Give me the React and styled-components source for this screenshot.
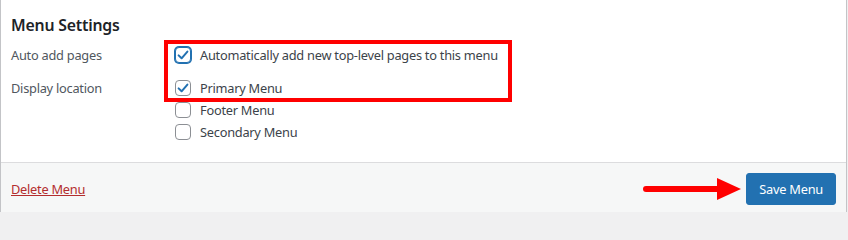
import React from 'react';
import styled, { createGlobalStyle } from 'styled-components';

const GlobalStyle = createGlobalStyle`
   html, body {
      margin: 0;
      padding: 0;
      background: #f0f0f1;
   }
   body {
      font-family: "Noto Sans", "Open Sans", Arial, sans-serif;
      font-size: 12.8px;
      letter-spacing: -0.25px;
      color: #3c434a;
   }
`

const Panel = styled.div`
   width: 845px;
   height: 212px;
   display: flex;
   flex-direction: column;
   background: #fff;
   border-left: 1px solid #c3c4c7;
   border-right: 1px solid #c3c4c7;
`
const Body = styled.div`
   position: relative;
   padding: 14px 10px 19px 10px;
`
const Heading = styled.h3`
   margin: 0 0 8px 0;
   font-size: 15.8px;
   letter-spacing: -0.2px;
   line-height: 22px;
   font-weight: 600;
   color: #1d2327;
`
const SettingsGrid = styled.div`
   display: grid;
   grid-template-columns: 164px 1fr;
   row-gap: 11px;
`
const RowLabel = styled.div`
   height: 22px;
   line-height: 23px;
   color: #50575e;
`
const OptionList = styled.div`
   display: flex;
   flex-direction: column;
`
const Option = styled.label`
   display: flex;
   align-items: center;
   gap: 9px;
   height: 22px;
   color: #3c434a;
`
const Box = styled.span`
   box-sizing: border-box;
   width: 16px;
   height: 16px;
   flex: none;
   display: flex;
   align-items: center;
   justify-content: center;
   border: 1px solid ${({ $focused }) => ($focused ? '#2271b1' : '#8c8f94')};
   border-radius: 4px;
   background: #fff;
   box-shadow: ${({ $focused }) => ($focused ? '0 0 0 1px #2271b1' : 'none')};
`
const Highlight = styled.div`
   position: absolute;
   left: 163px;
   top: 40px;
   width: 348px;
   height: 62px;
   box-sizing: border-box;
   border: 4px solid #ff0000;
   pointer-events: none;
`
const Footer = styled.div`
   flex: 1;
   display: flex;
   align-items: flex-start;
   justify-content: space-between;
   padding: 10px 10px 0 10px;
   background: #f6f7f7;
   border-top: 1px solid #dcdcde;
`
const DeleteLink = styled.a`
   margin-top: 6px;
   line-height: 20px;
   color: #b32d2e;
   text-decoration: underline;
   cursor: pointer;
`
const Actions = styled.div`
   display: flex;
   align-items: center;
   gap: 4px;
`
const SaveButton = styled.button`
   height: 32px;
   padding: 0 12px;
   font-family: inherit;
   font-size: 12.8px;
   letter-spacing: -0.25px;
   color: #fff;
   background: #2271b1;
   border: 1px solid #2271b1;
   border-radius: 3px;
   cursor: pointer;
`

const Check = ({ checked, focused }) => (
   <Box $focused={focused}>
      {checked && (
         <svg width="14" height="14" viewBox="0 0 14 14">
            <path d="M2.6 7.4 L5.6 10.3 L11.4 3.6" fill="none" stroke="#2271b1" strokeWidth="2" strokeLinecap="round" strokeLinejoin="round"/>
         </svg>
      )}
   </Box>
)

const Arrow = () => (
   <svg width="100" height="22" viewBox="0 0 100 22">
      <line x1="4" y1="11" x2="78" y2="11" stroke="#ff0000" strokeWidth="6" strokeLinecap="round"/>
      <polygon points="75,0 99,11 75,22" fill="#ff0000"/>
   </svg>
)

const locations = [
   { name: 'Primary Menu', checked: true },
   { name: 'Footer Menu', checked: false },
   { name: 'Secondary Menu', checked: false },
]

const App = () => {
   return(
      <>
         <GlobalStyle/>
         <Panel>
            <Body>
               <Heading>Menu Settings</Heading>
               <SettingsGrid>
                  <RowLabel>Auto add pages</RowLabel>
                  <OptionList>
                     <Option>
                        <Check checked focused/>
                        Automatically add new top-level pages to this menu
                     </Option>
                  </OptionList>

                  <RowLabel>Display location</RowLabel>
                  <OptionList>
                     {locations.map(loc => (
                        <Option key={loc.name}>
                           <Check checked={loc.checked}/>
                           {loc.name}
                        </Option>
                     ))}
                  </OptionList>
               </SettingsGrid>
               <Highlight/>
            </Body>
            <Footer>
               <DeleteLink>Delete Menu</DeleteLink>
               <Actions>
                  <Arrow/>
                  <SaveButton>Save Menu</SaveButton>
               </Actions>
            </Footer>
         </Panel>
      </>
   )
}

export default App;
